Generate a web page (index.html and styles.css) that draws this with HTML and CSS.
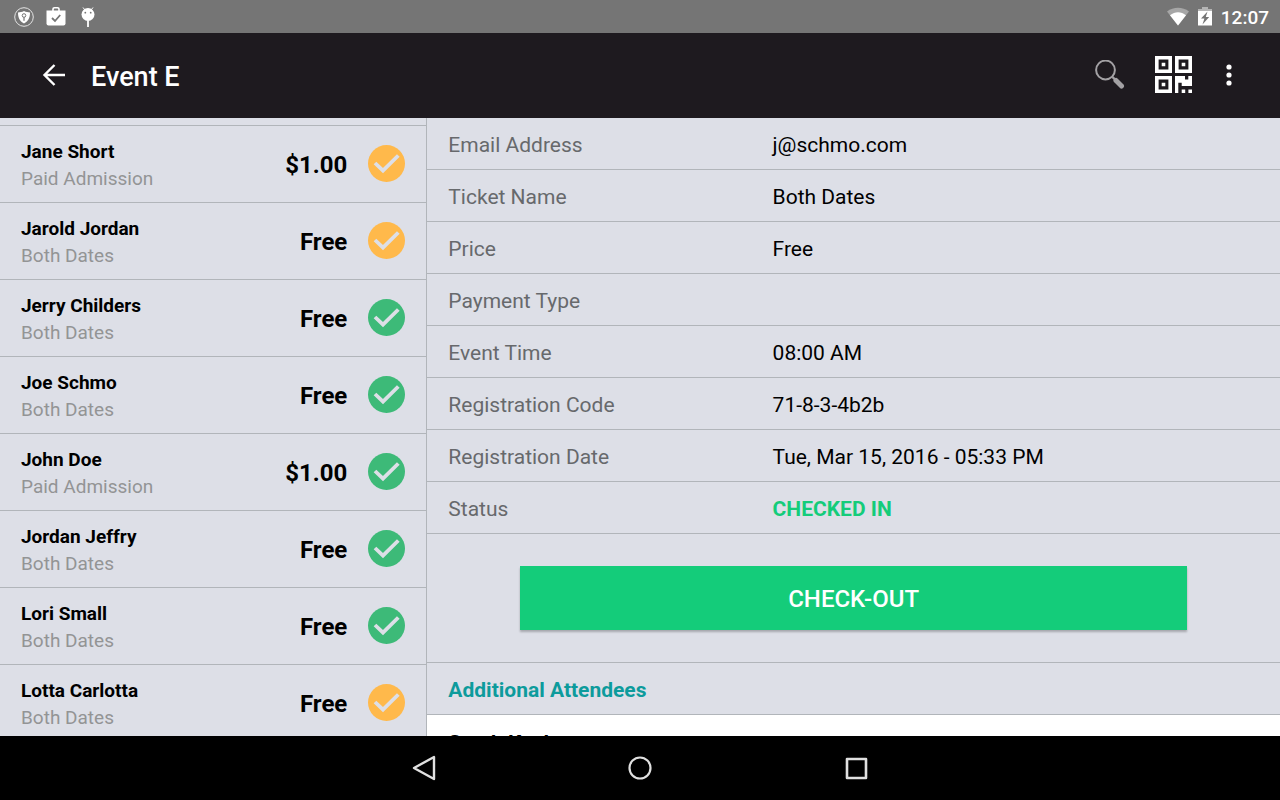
FILE: index.html
```html
<!DOCTYPE html>
<html lang="en">
<head>
  <meta charset="UTF-8">
  <meta name="viewport" content="width=device-width, initial-scale=1.0">
  <title>Event E</title>
  <link rel="stylesheet" href="styles.css">
</head>
<body>
  <svg class="defs" aria-hidden="true">
    <symbol id="check" viewBox="0 0 37 37">
      <circle cx="18.5" cy="18.5" r="18.5" fill="currentColor"/>
      <path d="M7 18l8 7.700L30.300 10.500" fill="none" stroke="#dddfe7" stroke-width="3.800"/>
    </symbol>
  </svg>

  <div class="status-bar">
    <svg class="status-icon" width="20" height="20" viewBox="0 0 20 20">
      <circle cx="10" cy="10" r="9.3" fill="none" stroke="#e4e4e4" stroke-width="1"/>
      <path d="M10 4c2 1 4 1.400 6 1.400 0 5-1.500 8.600-6 11.100C5.500 14 4 10.400 4 5.400 6 5.400 8 5 10 4z" fill="#fff"/>
      <circle cx="10" cy="8.500" r="1.800" fill="none" stroke="#757575" stroke-width="1"/>
      <path d="M10 10.300v3.400" stroke="#757575" stroke-width="1.200"/>
    </svg>
    <svg class="status-icon" width="20" height="20" viewBox="0 0 20 20">
      <path d="M7 4V2q0-1.200 1.400-1.200h3.200Q13 .8 13 2v2" fill="none" stroke="#fff" stroke-width="1.600"/>
      <path d="M.5 3.500h19v13q0 2-2 2h-15q-2 0-2-2z" fill="#fff"/>
      <path d="M6 11l3 3L14.200 8" fill="none" stroke="#757575" stroke-width="1.800"/>
    </svg>
    <svg class="status-icon" width="20" height="20" viewBox="0 0 20 20">
      <circle cx="10" cy="7.500" r="6.500" fill="#fff"/>
      <path d="M5 .5l2 2.500M15 .5L13 3" stroke="#fff" stroke-width="1"/>
      <path d="M10 13.500V20" stroke="#fff" stroke-width="1.800"/>
      <circle cx="7.300" cy="5.700" r=".9" fill="#757575"/>
      <circle cx="12.700" cy="5.700" r=".9" fill="#757575"/>
    </svg>
    <span class="spacer"></span>
    <svg width="24" height="20" viewBox="0 0 24 20">
      <path d="M1 4.500C7.500-.4 16.500-.4 23 4.500L12 18.500z" fill="#a6a6a6"/>
      <path d="M4 8.200c5-4 11-4 16 0l-8 10.300z" fill="#fff"/>
    </svg>
    <svg class="battery" width="14" height="20" viewBox="0 0 14 20">
      <path d="M4 0h6v2h4v3H0V2h4z" fill="#b5b5b5"/>
      <path d="M0 4h14v14.500H0z" fill="#fff"/>
      <path d="M9.500 4.500L3 11.500h3.400L4.500 17.500l6.700-7.500H7.800z" fill="#757575"/>
    </svg>
    <span class="clock">12:07</span>
  </div>

  <header class="app-bar">
    <button class="icon-btn" aria-label="Back">
      <svg width="24" height="24" viewBox="0 0 24 24">
        <path d="M23 12H3M12.500 2L2.500 12l10 10" fill="none" stroke="#fff" stroke-width="2.400"/>
      </svg>
    </button>
    <h1>Event E</h1>
    <span class="spacer"></span>
    <button class="icon-btn" aria-label="Search">
      <svg width="30" height="30" viewBox="0 0 30 30">
        <circle cx="10.500" cy="10" r="9.400" fill="none" stroke="#a3a1a4" stroke-width="2"/>
        <path d="M17.500 17l3 3" stroke="#a3a1a4" stroke-width="2.400"/>
        <path d="M21 20.500l5.500 5.500" stroke="#a3a1a4" stroke-width="5" stroke-linecap="round"/>
      </svg>
    </button>
    <button class="icon-btn scan" aria-label="Scan code">
      <svg width="37" height="37" viewBox="0 0 37 37">
        <g fill="none" stroke="#fff" stroke-width="3.600">
          <path d="M1.800 1.800h13.400v13.400H1.800zM21.800 1.800h13.400v13.400H21.800zM1.800 21.800h13.400v13.400H1.800z"/>
        </g>
        <g fill="#fff">
          <path d="M6.700 6.700h3.600v3.600H6.700zM26.700 6.700h3.600v3.600h-3.600zM6.700 26.700h3.600v3.600H6.700z"/>
          <path d="M20 20h10v3.500h3.300V20H37v10H26.700v-3.300h-3.400V37H20z"/>
          <path d="M26.700 33.400h3.500V37h-3.500zM33.400 33.400H37V37h-3.600z"/>
        </g>
      </svg>
    </button>
    <button class="icon-btn more" aria-label="More options">
      <svg width="6" height="22" viewBox="0 0 6 22" fill="#fff">
        <circle cx="3" cy="3" r="2.600"/>
        <circle cx="3" cy="11" r="2.600"/>
        <circle cx="3" cy="19" r="2.600"/>
      </svg>
    </button>
  </header>

  <main class="panes">
    <ul class="attendees">
      <li class="attendee">
        <div class="who"><div class="name">Jane Short</div><div class="ticket">Paid Admission</div></div>
        <span class="price">$1.00</span>
        <svg class="mark pending"><use href="#check"/></svg>
      </li>
      <li class="attendee">
        <div class="who"><div class="name">Jarold Jordan</div><div class="ticket">Both Dates</div></div>
        <span class="price">Free</span>
        <svg class="mark pending"><use href="#check"/></svg>
      </li>
      <li class="attendee">
        <div class="who"><div class="name">Jerry Childers</div><div class="ticket">Both Dates</div></div>
        <span class="price">Free</span>
        <svg class="mark"><use href="#check"/></svg>
      </li>
      <li class="attendee">
        <div class="who"><div class="name">Joe Schmo</div><div class="ticket">Both Dates</div></div>
        <span class="price">Free</span>
        <svg class="mark"><use href="#check"/></svg>
      </li>
      <li class="attendee">
        <div class="who"><div class="name">John Doe</div><div class="ticket">Paid Admission</div></div>
        <span class="price">$1.00</span>
        <svg class="mark"><use href="#check"/></svg>
      </li>
      <li class="attendee">
        <div class="who"><div class="name">Jordan Jeffry</div><div class="ticket">Both Dates</div></div>
        <span class="price">Free</span>
        <svg class="mark"><use href="#check"/></svg>
      </li>
      <li class="attendee">
        <div class="who"><div class="name">Lori Small</div><div class="ticket">Both Dates</div></div>
        <span class="price">Free</span>
        <svg class="mark"><use href="#check"/></svg>
      </li>
      <li class="attendee">
        <div class="who"><div class="name">Lotta Carlotta</div><div class="ticket">Both Dates</div></div>
        <span class="price">Free</span>
        <svg class="mark pending"><use href="#check"/></svg>
      </li>
    </ul>

    <section class="details">
      <dl class="fields">
        <div class="field"><dt>Email Address</dt><dd>j@schmo.com</dd></div>
        <div class="field"><dt>Ticket Name</dt><dd>Both Dates</dd></div>
        <div class="field"><dt>Price</dt><dd>Free</dd></div>
        <div class="field"><dt>Payment Type</dt><dd></dd></div>
        <div class="field"><dt>Event Time</dt><dd>08:00 AM</dd></div>
        <div class="field"><dt>Registration Code</dt><dd>71-8-3-4b2b</dd></div>
        <div class="field"><dt>Registration Date</dt><dd>Tue, Mar 15, 2016 - 05:33 PM</dd></div>
        <div class="field"><dt>Status</dt><dd class="checked-in">CHECKED IN</dd></div>
      </dl>
      <div class="action">
        <button class="checkout">CHECK-OUT</button>
      </div>
      <h2>Additional Attendees</h2>
      <div class="extra">Sarah Kush</div>
    </section>
  </main>

  <nav class="nav-bar">
    <button class="icon-btn" aria-label="Back">
      <svg width="26" height="26" viewBox="0 0 26 26">
        <path d="M23 2v22L3 13z" fill="none" stroke="#e0e0e0" stroke-width="2.400" stroke-linejoin="round"/>
      </svg>
    </button>
    <button class="icon-btn" aria-label="Home">
      <svg width="26" height="26" viewBox="0 0 26 26">
        <circle cx="13" cy="13" r="10.500" fill="none" stroke="#e0e0e0" stroke-width="2.200"/>
      </svg>
    </button>
    <button class="icon-btn" aria-label="Recent apps">
      <svg width="26" height="26" viewBox="0 0 26 26">
        <path d="M4 4h19v19H4z" fill="none" stroke="#e0e0e0" stroke-width="2.600" stroke-linejoin="round"/>
      </svg>
    </button>
  </nav>
</body>
</html>
```
FILE: styles.css
```css
* { box-sizing: border-box; }
html, body { height: 100%; margin: 0; overflow: hidden; }
body {
  display: flex; flex-direction: column;
  font-family: Roboto, 'Liberation Sans', sans-serif; color: #000; background: #dddfe7;
}
button { font-family: inherit; border: none; cursor: pointer; }
svg { display: block; flex: none; }
.defs { position: absolute; width: 0; height: 0; }
.spacer { flex: 1; }
.icon-btn { background: none; padding: 0; }

/* status bar */
.status-bar {
  flex: none; height: 33px; padding: 0 11px 0 14px;
  display: flex; align-items: center; background: #757575;
}
.status-icon { margin-right: 12px; }
.battery { margin: 0 9px 0 8px; }
.clock { padding-top: 2px; font-size: 19px; font-weight: 500; color: #fff; }

/* app bar */
.app-bar {
  flex: none; height: 85px; padding: 0 48px 2px 42px;
  display: flex; align-items: center; background: #1e1a1f;
}
.app-bar h1 { margin: 0 0 0 25px; padding-top: 4px; font-size: 27px; line-height: 32px; font-weight: 500; color: #fff; }
.scan { margin: 0 34px 0 30px; }

/* panes */
.panes { flex: 1; min-height: 0; display: flex; }
.attendees {
  flex: 1; min-width: 0; margin: 0; padding: 7px 0 0; list-style: none;
  border-right: 1px solid #b1b5ba; overflow: hidden;
}
.attendee {
  height: 77px; padding: 0 21px 2px; border-top: 1px solid #b1b5ba;
  display: flex; align-items: center;
}
.who { flex: 1; padding-top: 4px; font-size: 19px; line-height: 27px; }
.name { font-weight: 700; }
.ticket { color: #939495; }
.price { padding-top: 4px; font-size: 24px; font-weight: 700; margin-right: 21px; }
.mark { width: 37px; height: 37px; color: #3dba78; }
.pending { color: #ffb94b; }

.details { flex: 2; min-width: 0; overflow: hidden; }
.fields { margin: 0; }
.field {
  height: 52px; padding: 2px 21px 0; border-bottom: 1px solid #b1b5ba;
  display: flex; align-items: center; font-size: 21px;
}
.field dt { width: 40%; color: #67696c; }
.field dd { margin: 0; }
.field .checked-in { font-weight: 700; color: #14cc7a; }
.action { padding: 32px 93px; }
.checkout {
  display: block; width: 100%; height: 64px; padding: 2px 0 0; font-size: 24px; font-weight: 500;
  color: #fff; background: #14cc7a; box-shadow: 0 2px 2px rgba(0,0,0,0.25);
}
.details h2 {
  height: 53px; margin: 0; padding: 2px 21px 0; display: flex; align-items: center;
  border-top: 1px solid #b1b5ba; border-bottom: 1px solid #b1b5ba;
  font-size: 21px; font-weight: 700; color: #0d9b9c;
}
.extra { padding: 14px 21px; background: #fff; font-size: 21px; line-height: 28px; font-weight: 700; }

/* navigation bar */
.nav-bar {
  flex: none; height: 64px; background: #000;
  display: flex; align-items: center; justify-content: center; gap: 190px;
}
```
